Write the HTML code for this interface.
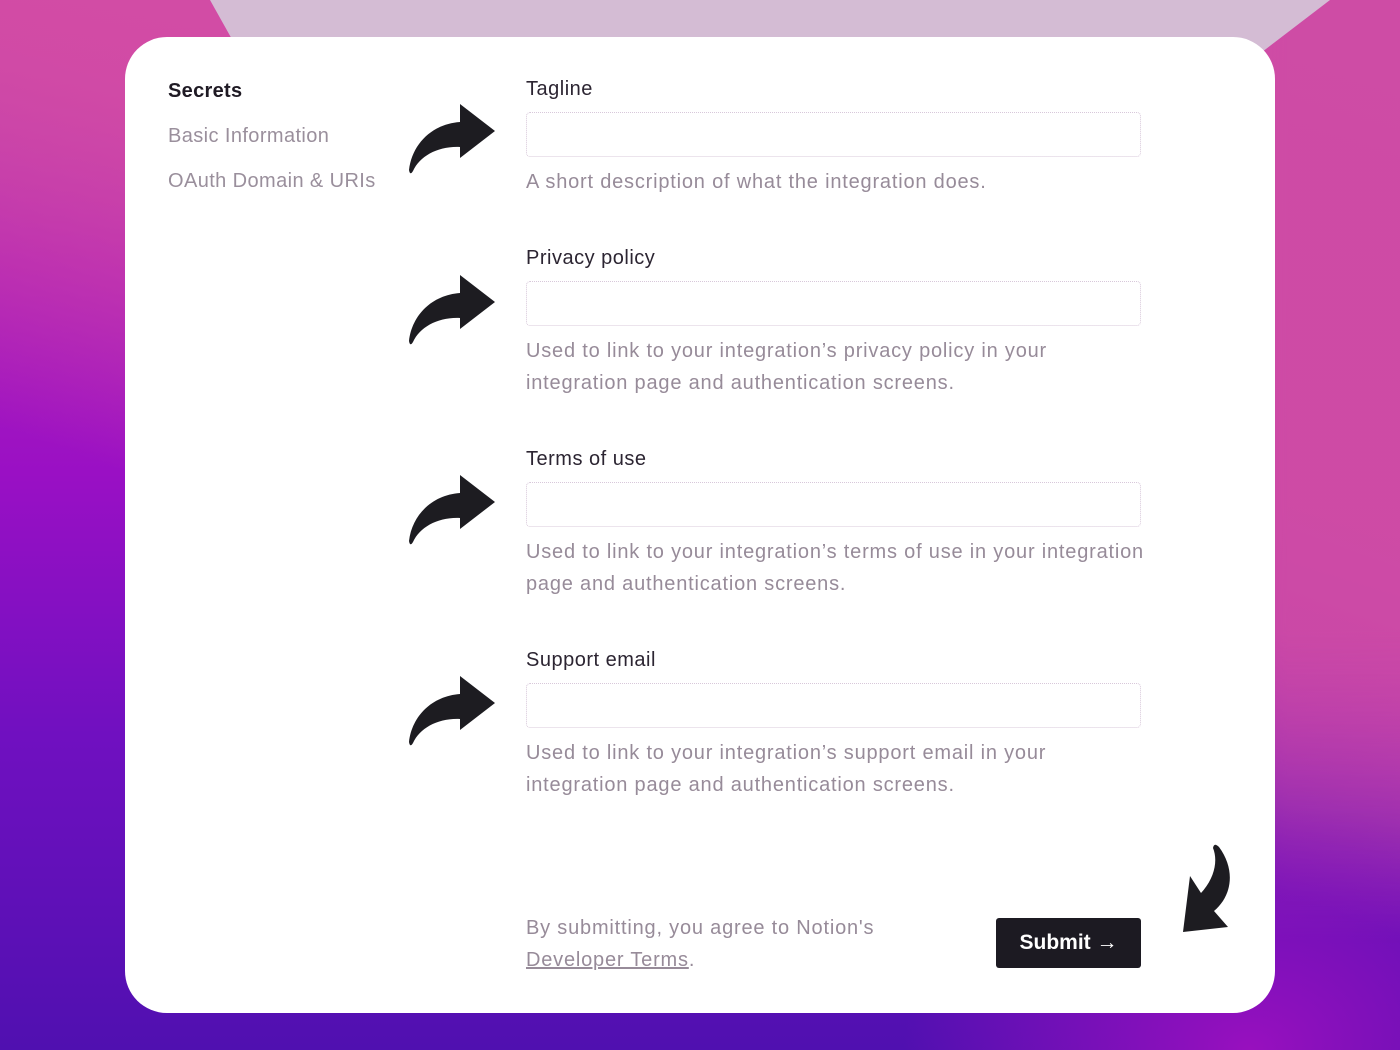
<!DOCTYPE html>
<html><head><meta charset="utf-8"><style>
*{margin:0;padding:0;box-sizing:border-box}
body{width:1400px;height:1050px;overflow:hidden;position:relative;font-family:"Liberation Sans",sans-serif;
background:linear-gradient(180deg,#c44aa8 0%,#b020b8 25%,#9a10c4 45%,#7010c0 70%,#5010b0 100%)}
.bg1{position:absolute;left:0;top:0;width:1400px;height:1050px;
background:linear-gradient(200deg,rgba(215,80,165,1) 0%,rgba(210,75,165,0.95) 35%,rgba(200,70,170,0) 60%)}
.bg3{position:absolute;left:0;top:0;width:1400px;height:1050px;
background:linear-gradient(90deg,rgba(0,0,0,0) 70%,rgba(205,75,165,0.9) 92%);
-webkit-mask-image:linear-gradient(180deg,#000 60%,transparent 90%);mask-image:linear-gradient(180deg,#000 60%,transparent 90%)}
.bg4{position:absolute;left:900px;top:800px;width:500px;height:250px;background:radial-gradient(ellipse at 70% 100%,rgba(160,16,192,0.9),rgba(160,16,192,0) 70%)}
.bg2{position:absolute;left:210px;top:0;width:1120px;height:60px;background:#d4bcd4;clip-path:polygon(0 0,100% 0,93% 100%,3% 100%)}
.card{position:absolute;left:125px;top:37px;width:1150px;height:976px;background:#fff;border-radius:42px}
.nav{position:absolute;left:168px;font-size:20px;color:#9a8f9c;letter-spacing:0.4px}
.lbl{position:absolute;left:526px;font-size:20px;color:#2c2532;letter-spacing:0.5px}
.inp{position:absolute;left:526px;width:615px;height:45px;border:1px dotted #d8c8da;border-radius:4px}
.help{position:absolute;left:526px;font-size:20px;color:#978b99;line-height:32px;letter-spacing:0.8px;white-space:nowrap}
.btn{position:absolute;left:996px;top:918px;width:145px;height:50px;background:#1c1a22;border-radius:3px;color:#fff;font-weight:bold;font-size:21px;line-height:50px;text-align:center}
svg{position:absolute;left:0;top:0}
</style></head><body>
<div class="bg1"></div><div class="bg3"></div><div class="bg4"></div><div class="bg2"></div>
<div class="card"></div>
<div class="nav" style="top:80px;color:#1f1a24;font-weight:bold;letter-spacing:0.3px">Secrets</div>
<div class="nav" style="top:125px">Basic Information</div>
<div class="nav" style="top:170px">OAuth Domain &amp; URIs</div>

<div class="lbl" style="top:78px">Tagline</div>
<div class="inp" style="top:112px"></div>
<div class="help" style="top:166px">A short description of what the integration does.</div>

<div class="lbl" style="top:247px">Privacy policy</div>
<div class="inp" style="top:281px"></div>
<div class="help" style="top:335px">Used to link to your integration’s privacy policy in your<br>integration page and authentication screens.</div>

<div class="lbl" style="top:448px">Terms of use</div>
<div class="inp" style="top:482px"></div>
<div class="help" style="top:536px">Used to link to your integration’s terms of use in your integration<br>page and authentication screens.</div>

<div class="lbl" style="top:649px">Support email</div>
<div class="inp" style="top:683px"></div>
<div class="help" style="top:737px">Used to link to your integration’s support email in your<br>integration page and authentication screens.</div>

<div class="help" style="top:912px">By submitting, you agree to Notion's<br><span style="text-decoration:underline">Developer Terms</span>.</div>
<div class="btn">Submit →</div>

<svg width="1400" height="1050">
<defs><path id="a" d="M60,14 L95,41 L60,68 L60,57 C38,56 20,66 13,81 Q10,86 9,80 C12,54 32,34 60,32 Z" fill="#1d1c21"/></defs>
<use href="#a" x="400" y="90"/>
<use href="#a" x="400" y="261"/>
<use href="#a" x="400" y="461"/>
<use href="#a" x="400" y="662"/>
<path d="M1183,932 L1190,876 L1201,893 C1215,878 1218,860 1213,848 Q1214,842 1219,847 C1236,870 1232,896 1214,911 L1228,927 Z" fill="#1d1c21"/>
</svg>
</body></html>
